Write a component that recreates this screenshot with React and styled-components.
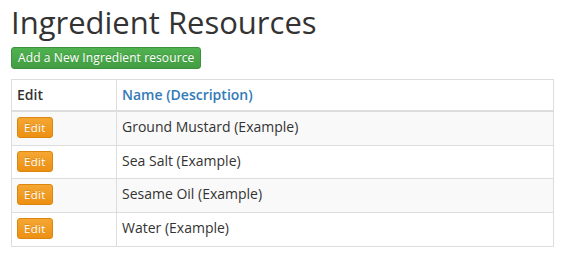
import React from 'react';
import styled, { createGlobalStyle } from 'styled-components';

const GlobalStyle = createGlobalStyle`
  body {
    margin: 0;
    background: #ffffff;
    font-family: "Open Sans", "Liberation Sans", sans-serif;
    font-size: 14px;
    color: #333333;
  }
`;

const Page = styled.div`
  padding: 0 11px;
`;

const Title = styled.h1`
  margin: 0;
  padding-top: 3px;
  font-size: 31px;
  font-weight: 400;
  line-height: 38px;
  color: #333333;
`;

const Button = styled.button`
  display: inline-block;
  font-family: inherit;
  color: #ffffff;
  border-radius: 3px;
  cursor: pointer;
  text-shadow: 0 -1px 0 rgba(0, 0, 0, 0.15);
  background: ${p => p.$kind === 'success'
    ? 'linear-gradient(#4fb24f, #449d44)'
    : 'linear-gradient(#f5a733, #ec9012)'};
  border: 1px solid ${p => p.$kind === 'success' ? '#3e8f3e' : '#dd860f'};
  font-size: ${p => p.$kind === 'success' ? '12px' : '11.5px'};
  letter-spacing: ${p => p.$kind === 'success' ? '0.1px' : '0.3px'};
  padding: ${p => p.$kind === 'success' ? '2px 6px' : '2px 6px'};
  line-height: 16px;
  height: ${p => p.$kind === 'success' ? '22px' : '21px'};
`;

const Toolbar = styled.div`
  margin-top: 6px;
  margin-bottom: 10px;
  height: 22px;
`;

const Table = styled.table`
  width: 543px;
  border-collapse: collapse;
  border: 1px solid #dddddd;
`;

const Th = styled.th`
  text-align: left;
  font-weight: 600;
  padding: 5px;
  line-height: 20px;
  border: 1px solid #dddddd;
  border-bottom-width: 2px;
  width: ${p => p.$width || 'auto'};
  color: ${p => p.$link ? '#337ab7' : '#333333'};
`;

const Row = styled.tr`
  background: ${p => p.$striped ? '#f9f9f9' : '#ffffff'};
`;

const Td = styled.td`
  padding: 5px;
  line-height: 20px;
  height: 22.7px;
  border: 1px solid #dddddd;
  vertical-align: top;
`;

const items = [
  'Ground Mustard (Example)',
  'Sea Salt (Example)',
  'Sesame Oil (Example)',
  'Water (Example)',
];

export default function App() {
  return (
    <Page>
      <GlobalStyle />
      <Title>Ingredient Resources</Title>
      <Toolbar>
        <Button $kind="success">Add a New Ingredient resource</Button>
      </Toolbar>
      <Table>
        <thead>
          <tr>
            <Th $width="94px">Edit</Th>
            <Th $link>Name (Description)</Th>
          </tr>
        </thead>
        <tbody>
          {items.map((name, i) => (
            <Row key={name} $striped={i % 2 === 0}>
              <Td><Button $kind="warning">Edit</Button></Td>
              <Td>{name}</Td>
            </Row>
          ))}
        </tbody>
      </Table>
    </Page>
  );
}
